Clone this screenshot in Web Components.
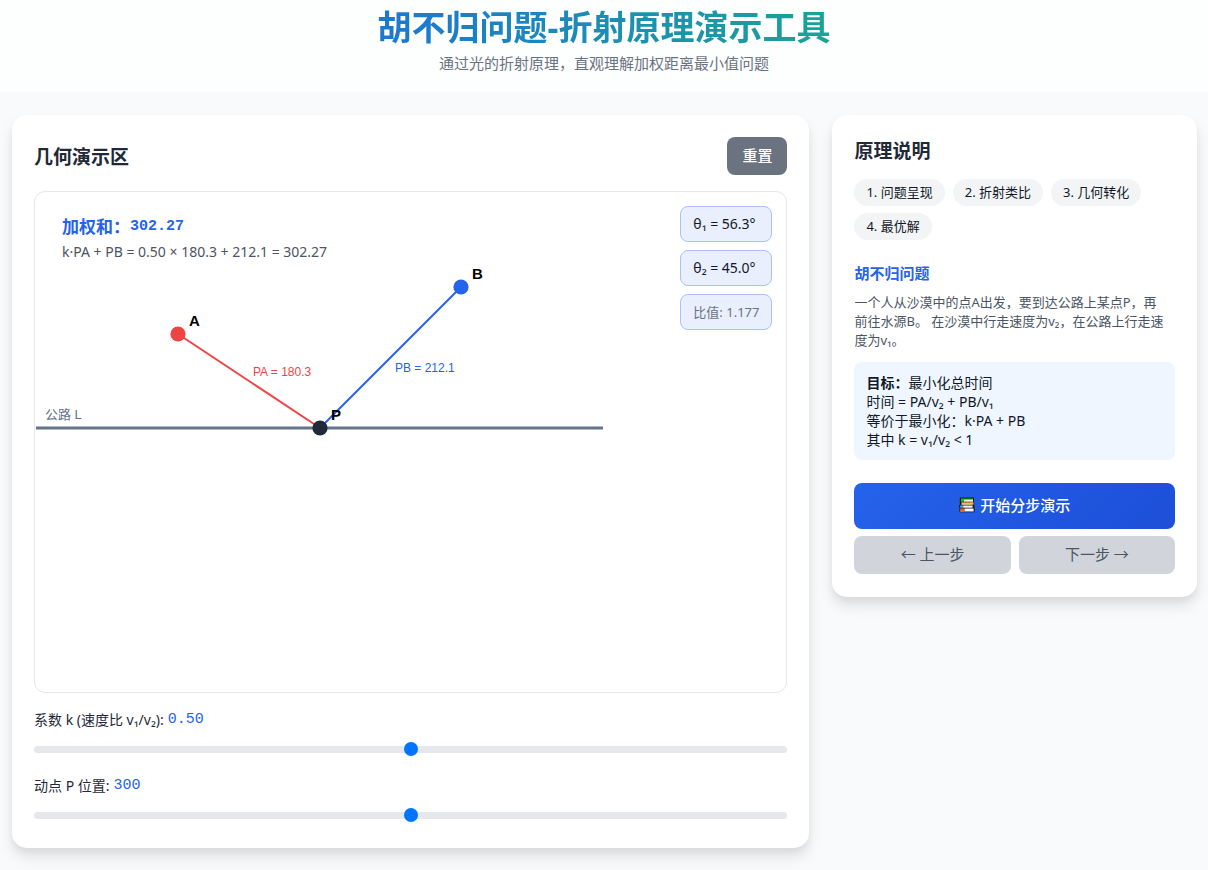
<!DOCTYPE html>
<html lang="zh-CN">
<head>
<meta charset="UTF-8">
<meta name="viewport" content="width=device-width, initial-scale=1.0">
<title>胡不归问题-折射原理演示工具</title>
<style>
  body {
    margin: 0;
    min-height: 100vh;
    background: #f9fafb;
    color: #111827;
    font-family: "Noto Sans", "Noto Sans CJK SC", sans-serif;
    font-size: 13px;
    line-height: 19px;
    --primary: #2563eb;
    --dark: #1f2937;
    --muted: #4b5563;
    --radius: 8px;
  }
</style>
</head>
<body>
<demo-app></demo-app>

<script>
/**
 * 页面标题
 */
class PageHeader extends HTMLElement {
  connectedCallback() {
    this.attachShadow({ mode: 'open' });
    this.shadowRoot.innerHTML = `
      <style>
        :host {
          display: flex;
          flex-direction: column;
          align-items: center;
          gap: 4px;
          padding: 7px 12px 17px;
          background: #fdfefe;
          text-align: center;
        }
        h1 {
          margin: 0;
          font-size: 34px;
          line-height: 40px;
          font-weight: 700;
          background: linear-gradient(90deg, #1d78d0, #1aa396);
          -webkit-background-clip: text;
          background-clip: text;
          color: transparent;
        }
        p {
          margin: 0;
          font-size: 15px;
          line-height: 24px;
          color: #6b7280;
        }
      </style>
      <h1><slot name="title"></slot></h1>
      <p><slot></slot></p>
    `;
  }
}
customElements.define('page-header', PageHeader);

/**
 * 白色卡片容器
 */
class PanelCard extends HTMLElement {
  connectedCallback() {
    this.attachShadow({ mode: 'open' });
    this.shadowRoot.innerHTML = `
      <style>
        :host {
          display: block;
          box-sizing: border-box;
          padding: 22px 22px 23px;
          background: #fff;
          border-radius: 15px;
          box-shadow: 0 9px 14px rgba(0, 0, 0, 0.1), 0 4px 6px rgba(0, 0, 0, 0.04);
        }
        header {
          display: flex;
          align-items: center;
          justify-content: space-between;
          margin-bottom: 16px;
        }
        h2 {
          margin: 0;
          padding-top: 2px;
          font-size: 19px;
          line-height: 24px;
          color: var(--dark);
        }
      </style>
      <header>
        <h2>${this.getAttribute('heading')}</h2>
        <slot name="action"></slot>
      </header>
      <slot></slot>
    `;
  }
}
customElements.define('panel-card', PanelCard);

/**
 * 按钮: variant = primary | reset | step
 */
class UiButton extends HTMLElement {
  connectedCallback() {
    this.attachShadow({ mode: 'open' });
    this.shadowRoot.innerHTML = `
      <style>
        :host { display: block; }
        button {
          display: flex;
          align-items: center;
          justify-content: center;
          gap: 5px;
          width: 100%;
          height: 38px;
          padding: 0 15px 2px;
          border: 0;
          border-radius: var(--radius);
          font: inherit;
          font-size: 15px;
          color: #fff;
          background: #6b7280;
          cursor: pointer;
        }
        :host([variant="primary"]) button {
          height: 46px;
          font-weight: 500;
          background: linear-gradient(135deg, #2563eb, #1d4ed8);
        }
        :host([variant="reset"]) button { font-weight: 500; }
        :host([variant="step"]) button {
          color: #4b5563;
          background: #d1d5db;
        }
      </style>
      <button type="button"><slot></slot></button>
    `;
  }
}
customElements.define('ui-button', UiButton);

/**
 * 书本图标
 */
class BooksIcon extends HTMLElement {
  connectedCallback() {
    this.attachShadow({ mode: 'open' });
    this.shadowRoot.innerHTML = `
      <style>
        :host, svg { display: block; }
      </style>
      <svg width="16" height="16" viewBox="0 0 16 16" aria-hidden="true">
        <path d="M1.5.5H15v4.6l-.6.4.8.6v3.4l.4.6v5.2H1.2L.4 14.500v-4L0 9.800V8l1.400-.4L.8 6.500V1.500z" fill="#15171c"/>
        <rect x="2" y="1.500" width="3" height="3.200" fill="#16c60c"/>
        <rect x="5" y="1.500" width="9" height="1" fill="#16c60c"/>
        <rect x="5" y="2.500" width="9" height="2.200" fill="#f3f3f3"/>
        <rect x="2.500" y="5.300" width="10" height="1" fill="#f5a83b"/>
        <rect x="2.500" y="6.300" width="10" height="1.400" fill="#fff1d0"/>
        <rect x="11.500" y="5.300" width="3" height="2.400" fill="#f5c04a"/>
        <rect x="1.200" y="8.500" width="3" height="2.200" fill="#4aaee8"/>
        <rect x="4.200" y="8.500" width="9.400" height="2.200" fill="#f3f3f3"/>
        <rect x="1.200" y="11.500" width="4.400" height="3.500" fill="#f7630c"/>
        <rect x="5.600" y="11.500" width="9" height="2.600" fill="#fff"/>
        <rect x="5.600" y="14" width="9" height="1" fill="#f7630c"/>
      </svg>
    `;
  }
}
customElements.define('books-icon', BooksIcon);

// 几何坐标 (A, B 固定, P 在公路上移动)
const POINT_A = { x: 150, y: 150 };
const POINT_B = { x: 450, y: 100 };
const ROAD_Y = 250;
const ROAD_LENGTH = 600;
const SCALE = 0.945;

const toScreen = (point) => ({
  x: Math.round(1 + point.x * SCALE),
  y: Math.round(point.y * SCALE)
});

/**
 * 几何画布, 包含加权和与角度信息
 */
class GeometryBoard extends HTMLElement {
  connectedCallback() {
    this.attachShadow({ mode: 'open' });
    this.update(0.5, 300);
  }

  update(k, p) {
    const pa = Math.hypot(p - POINT_A.x, ROAD_Y - POINT_A.y);
    const pb = Math.hypot(p - POINT_B.x, ROAD_Y - POINT_B.y);
    const sin1 = Math.abs(p - POINT_A.x) / pa;
    const sin2 = Math.abs(p - POINT_B.x) / pb;
    const degrees = (sin) => (Math.asin(sin) * 180 / Math.PI).toFixed(1);
    const sum = (k * pa + pb).toFixed(2);
    const ratio = sin2 ? (sin1 / sin2).toFixed(3) : '∞';

    const a = toScreen(POINT_A);
    const b = toScreen(POINT_B);
    const m = toScreen({ x: p, y: ROAD_Y });
    const end = toScreen({ x: ROAD_LENGTH, y: ROAD_Y });
    const midPA = { x: Math.round((a.x + m.x) / 2), y: Math.round((a.y + m.y) / 2) };
    const midPB = { x: Math.round((b.x + m.x) / 2), y: Math.round((b.y + m.y) / 2) };

    this.shadowRoot.innerHTML = `
      <style>
        :host {
          display: block;
          position: relative;
          border: 1px solid #e5e7eb;
          border-radius: 11px;
          background: #fff;
          overflow: hidden;
        }
        svg { display: block; width: 100%; height: 500px; }
        text { font-family: "Liberation Sans", "Noto Sans CJK SC", sans-serif; }
        .name { font-size: 15px; font-weight: 700; fill: #000; }
        .length { font-size: 12px; }
        .road { font-size: 13px; fill: #64748b; }
        .formula {
          position: absolute;
          top: 24px;
          left: 27px;
          font-size: 14px;
          color: var(--muted);
        }
        .sum {
          display: flex;
          align-items: center;
          height: 20px;
          margin-bottom: 6px;
          font-size: 17px;
          font-weight: 700;
          color: var(--primary);
        }
        .sum output {
          font-family: "Liberation Mono", monospace;
          font-size: 15px;
        }
        .badges {
          position: absolute;
          top: 14px;
          right: 14px;
          display: flex;
          flex-direction: column;
          gap: 8px;
        }
        .badges div {
          padding: 8px 12px;
          border: 1px solid #a8c1f7;
          border-radius: var(--radius);
          background: #e9effd;
          font-size: 14px;
          line-height: 18px;
        }
        .badges .ratio { font-size: 13px; color: #6b7280; }
      </style>
      <svg role="img" aria-label="几何演示">
        <line x1="1" y1="${m.y}" x2="${end.x}" y2="${m.y}" stroke="#64748b" stroke-width="3"/>
        <text class="road" x="10" y="${m.y - 9}">公路 L</text>
        <line x1="${a.x}" y1="${a.y}" x2="${m.x}" y2="${m.y}" stroke="#ef4444" stroke-width="2"/>
        <line x1="${m.x}" y1="${m.y}" x2="${b.x}" y2="${b.y}" stroke="#2563eb" stroke-width="2"/>
        <circle cx="${a.x}" cy="${a.y}" r="7.6" fill="#ef4444"/>
        <circle cx="${b.x}" cy="${b.y}" r="7.6" fill="#2563eb"/>
        <circle cx="${m.x}" cy="${m.y}" r="7.6" fill="#1f2937"/>
        <text class="name" x="${a.x + 11}" y="${a.y - 8}">A</text>
        <text class="name" x="${b.x + 11}" y="${b.y - 8}">B</text>
        <text class="name" x="${m.x + 11}" y="${m.y - 8}">P</text>
        <text class="length" x="${midPA.x + 4}" y="${midPA.y - 5}" fill="#ef4444">PA = ${pa.toFixed(1)}</text>
        <text class="length" x="${midPB.x + 4}" y="${midPB.y + 14}" fill="#2563eb">PB = ${pb.toFixed(1)}</text>
      </svg>
      <div class="formula">
        <div class="sum">加权和：<output>${sum}</output></div>
        <div>k·PA + PB = ${k.toFixed(2)} × ${pa.toFixed(1)} + ${pb.toFixed(1)} = ${sum}</div>
      </div>
      <div class="badges">
        <div>θ₁ = ${degrees(sin1)}°</div>
        <div>θ₂ = ${degrees(sin2)}°</div>
        <div class="ratio">比值: ${ratio}</div>
      </div>
    `;
  }
}
customElements.define('geometry-board', GeometryBoard);

/**
 * 带标签的滑块
 */
class RangeField extends HTMLElement {
  connectedCallback() {
    const digits = Number(this.getAttribute('digits') || 0);
    const initial = Number(this.getAttribute('value'));

    this.attachShadow({ mode: 'open' });
    this.shadowRoot.innerHTML = `
      <style>
        :host {
          display: flex;
          flex-direction: column;
          gap: 13px;
        }
        label {
          display: flex;
          align-items: center;
          gap: 4px;
          height: 20px;
          font-size: 14px;
          color: var(--dark);
        }
        output {
          font-family: "Liberation Mono", monospace;
          font-size: 15px;
          color: var(--primary);
        }
        input {
          -webkit-appearance: none;
          appearance: none;
          display: block;
          width: 100%;
          height: 14px;
          margin: 0;
          background: transparent;
        }
        input::-webkit-slider-runnable-track {
          height: 7px;
          border-radius: 4px;
          background: #e5e7eb;
        }
        input::-webkit-slider-thumb {
          -webkit-appearance: none;
          width: 14px;
          height: 14px;
          margin-top: -4px;
          border-radius: 50%;
          background: #0075ff;
        }
      </style>
      <label for="range"><span><slot></slot></span><output for="range">${initial.toFixed(digits)}</output></label>
      <input id="range" type="range" min="${this.getAttribute('min')}" max="${this.getAttribute('max')}"
        step="${this.getAttribute('step')}" value="${initial}">
    `;

    this._initial = initial;
    this._digits = digits;
    this._input = this.shadowRoot.querySelector('input');
    this._input.addEventListener('input', () => this._changed());
  }

  get value() {
    return Number(this._input.value);
  }

  reset() {
    this._input.value = this._initial;
    this._changed();
  }

  _changed() {
    this.shadowRoot.querySelector('output').textContent = this.value.toFixed(this._digits);
    this.dispatchEvent(new CustomEvent('value-change', { bubbles: true }));
  }
}
customElements.define('range-field', RangeField);

/**
 * 步骤标签
 */
class StepChip extends HTMLElement {
  connectedCallback() {
    this.attachShadow({ mode: 'open' });
    this.shadowRoot.innerHTML = `
      <style>
        :host {
          display: block;
          padding: 4px 12px;
          border-radius: 14px;
          background: #f3f4f6;
        }
      </style>
      <slot></slot>
    `;
  }
}
customElements.define('step-chip', StepChip);

/**
 * 主应用
 */
class DemoApp extends HTMLElement {
  connectedCallback() {
    this.attachShadow({ mode: 'open' });
    this.shadowRoot.innerHTML = `
      <style>
        :host { display: block; }
        main {
          display: grid;
          grid-template-columns: minmax(0, 35fr) minmax(0, 16fr);
          align-items: start;
          gap: 23px;
          padding: 23px 11px 21px 12px;
        }
        .controls {
          display: flex;
          flex-direction: column;
          gap: 19px;
          padding: 16px 0 3px;
        }
        .chips {
          display: flex;
          flex-wrap: wrap;
          gap: 7px 8px;
          margin-bottom: 23px;
        }
        h3 {
          margin: 0 0 10px;
          font-size: 15px;
          line-height: 20px;
          color: var(--primary);
        }
        p { margin: 0 0 12px; color: var(--muted); }
        .goal {
          margin-bottom: 23px;
          padding: 11px 12px;
          border-radius: var(--radius);
          background: #eff6ff;
          font-size: 14px;
        }
        .buttons {
          display: grid;
          grid-template-columns: 1fr 1fr;
          gap: 7px 8px;
        }
        .buttons [variant="primary"] { grid-column: span 2; }
        @media (max-width: 800px) {
          main { grid-template-columns: minmax(0, 1fr); }
        }
      </style>

      <page-header>
        <span slot="title">胡不归问题-折射原理演示工具</span>
        通过光的折射原理，直观理解加权距离最小值问题
      </page-header>

      <main>
        <panel-card heading="几何演示区">
          <ui-button slot="action" variant="reset" id="reset">重置</ui-button>
          <geometry-board></geometry-board>
          <div class="controls">
            <range-field id="k" min="0.1" max="0.9" step="0.01" value="0.5" digits="2">系数 k (速度比 v₁/v₂):</range-field>
            <range-field id="p" min="50" max="550" step="1" value="300">动点 P 位置:</range-field>
          </div>
        </panel-card>

        <panel-card heading="原理说明">
          <div class="chips">
            <step-chip>1. 问题呈现</step-chip>
            <step-chip>2. 折射类比</step-chip>
            <step-chip>3. 几何转化</step-chip>
            <step-chip>4. 最优解</step-chip>
          </div>
          <h3>胡不归问题</h3>
          <p>一个人从沙漠中的点A出发，要到达公路上某点P，再<br>前往水源B。 在沙漠中行走速度为v₂，在公路上行走速<br>度为v₁。</p>
          <div class="goal">
            <strong>目标：</strong>最小化总时间<br>
            时间 = PA/v₂ + PB/v₁<br>
            等价于最小化：k·PA + PB<br>
            其中 k = v₁/v₂ &lt; 1
          </div>
          <div class="buttons">
            <ui-button variant="primary"><books-icon></books-icon>开始分步演示</ui-button>
            <ui-button variant="step">← 上一步</ui-button>
            <ui-button variant="step">下一步 →</ui-button>
          </div>
        </panel-card>
      </main>
    `;

    const board = this.shadowRoot.querySelector('geometry-board');
    const k = this.shadowRoot.querySelector('#k');
    const p = this.shadowRoot.querySelector('#p');

    this.shadowRoot.addEventListener('value-change', () => board.update(k.value, p.value));
    this.shadowRoot.querySelector('#reset').addEventListener('click', () => {
      k.reset();
      p.reset();
    });
  }
}
customElements.define('demo-app', DemoApp);
</script>
</body>
</html>
